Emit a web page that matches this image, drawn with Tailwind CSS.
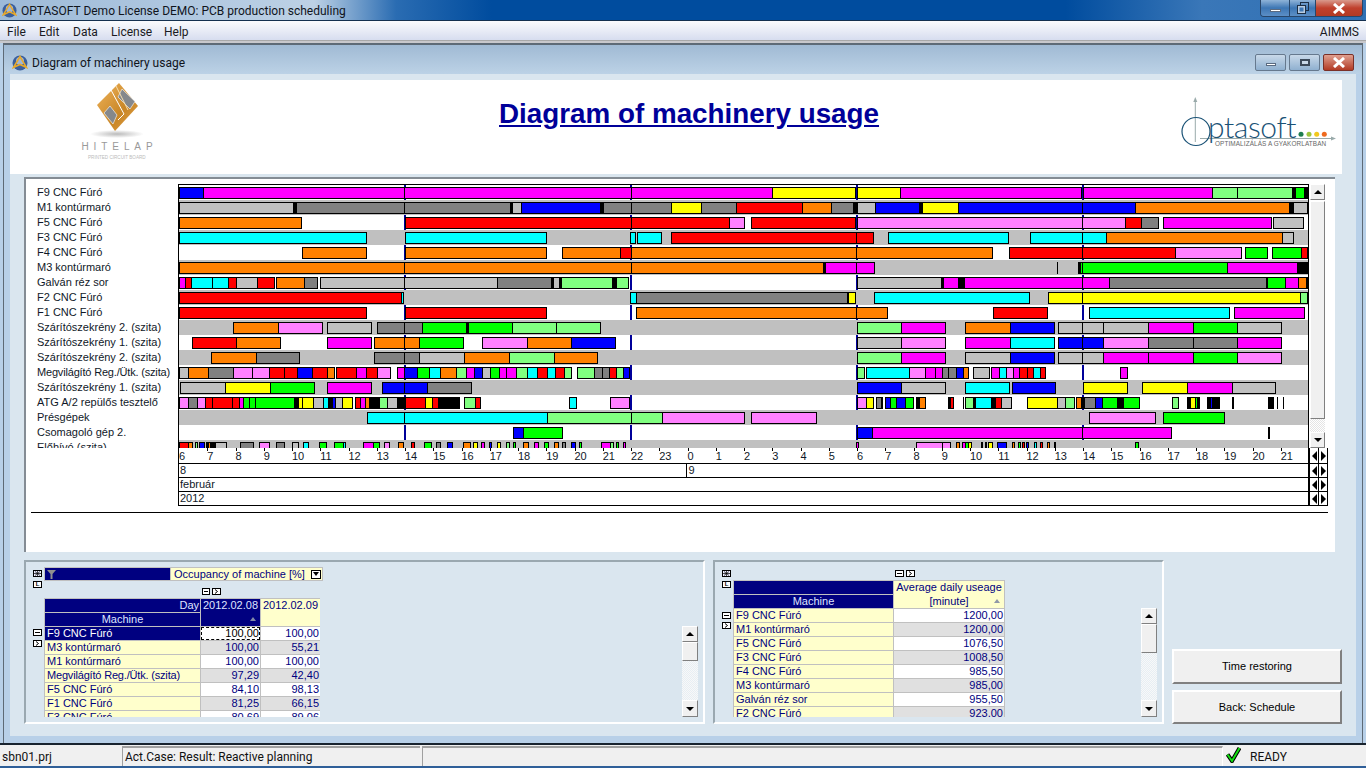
<!DOCTYPE html>
<html>
<head>
<meta charset="utf-8">
<script src="https://cdn.jsdelivr.net/npm/@tailwindcss/browser@4"></script>
</head>
<body class="bg-[#b8d0e8]">
<div class="w-[1366px] h-[768px] overflow-hidden flex flex-col font-['Liberation_Sans',Arial,sans-serif] text-[11px] text-black">

  <!-- App title bar -->
  <div class="h-[20px] shrink-0 flex items-center relative bg-[linear-gradient(90deg,#9dbad8_0%,#bdd1e5_23%,#2a6cb2_29%,#004c9e_36%,#004c9e_78%,#3a77b8_88%,#2f70b4_100%)]">
    <svg class="ml-[2px] shrink-0" width="15" height="15" viewBox="0 0 16 16"><circle cx="8" cy="8" r="7.5" fill="#3b5f9c"/><circle cx="8" cy="6" r="4" fill="#9fb6d8"/><path d="M1.5 12.5 8 1.5l6.5 11-6.5-3z" fill="none" stroke="#e8a92a" stroke-width="1.6"/></svg>
    <span class="ml-[4px] mt-[2px] text-[12px] font-['Roboto',sans-serif] text-[#10141c] whitespace-nowrap">OPTASOFT Demo License DEMO: PCB production scheduling</span>
    <div class="ml-auto mr-[3px] w-[103px] h-[17px] self-start flex border border-t-0 border-[#28466a] rounded-b-[4px] overflow-hidden">
      <div class="w-[29px] flex items-center justify-center border-r border-[#28466a] bg-[linear-gradient(#8fb3d8,#3d76b4_50%,#5c8fc6)]"><div class="w-[11px] h-[3px] mt-[5px] bg-white border border-[#5a6a80]"></div></div>
      <div class="w-[26px] flex items-center justify-center border-r border-[#28466a] bg-[linear-gradient(#8fb3d8,#3d76b4_50%,#5c8fc6)]"><svg width="12" height="12" viewBox="0 0 12 12"><rect x="3.5" y=".5" width="8" height="8" fill="none" stroke="#1d2f45"/><rect x=".5" y="3.5" width="8" height="8" fill="#b8cbe0" stroke="#1d2f45"/><rect x="2.5" y="5.5" width="4" height="4" fill="#3d76b4"/></svg></div>
      <div class="flex-1 flex items-center justify-center bg-[linear-gradient(#d99a8c,#c0402c_50%,#b23a24)]"><svg width="14" height="11" viewBox="0 0 14 11"><path d="M2 1l10 9M12 1 2 10" stroke="#fff" stroke-width="3"/></svg></div>
    </div>
  </div>
  <div class="h-px shrink-0 bg-[#14304f]"></div>

  <!-- Menu bar -->
  <div class="h-[19px] shrink-0 flex items-center pl-[7px] pr-[7px] pt-[3px] text-[12px] font-['Roboto',sans-serif] text-[#1a1a22] bg-[linear-gradient(#fafbfd,#d7ddef)]">
    <span class="w-[32px]">File</span><span class="w-[34px]">Edit</span><span class="w-[38px]">Data</span><span class="w-[53px]">License</span><span>Help</span><span class="ml-auto">AIMMS</span>
  </div>
  <div class="h-[3px] shrink-0 bg-[#c8c8cc] border-t border-[#a8a8a8]"></div>

  <!-- Child window region -->
  <div class="flex-1 min-h-0 pl-[3px] pr-[3px] bg-[#b8d0e8]">
    <div class="h-[700px] border-l border-r border-t-2 border-[#5e6a76] flex flex-col bg-[#b8d0e8]">
      <!-- Child title -->
      <div class="h-[29px] shrink-0 flex items-center pl-[8px] pr-[8px] pt-[6px] bg-[linear-gradient(#a0bad4,#bcd2e6)]">
        <svg class="shrink-0" width="16" height="16" viewBox="0 0 16 16"><circle cx="8" cy="8" r="7.5" fill="#3b5f9c"/><circle cx="8" cy="6" r="4" fill="#9fb6d8"/><path d="M1.5 12.5 8 1.5l6.5 11-6.5-3z" fill="none" stroke="#e8a92a" stroke-width="1.6"/></svg>
        <span class="ml-[4px] text-[12px] font-['Roboto',sans-serif] text-[#10141c] whitespace-nowrap">Diagram of machinery usage</span>
        <div class="ml-auto flex gap-[3px]">
          <div class="w-[31px] h-[17px] rounded-[2px] border border-[#66798e] flex items-center justify-center bg-[linear-gradient(#c9d9e9,#8fb0d0)]"><div class="w-[10px] h-[3px] mt-[4px] bg-white border border-[#5a6a80]"></div></div>
          <div class="w-[31px] h-[17px] rounded-[2px] border border-[#66798e] flex items-center justify-center bg-[linear-gradient(#c9d9e9,#8fb0d0)]"><div class="w-[10px] h-[7px] bg-[#c9d9e9] border-2 border-[#3c4a5a]"></div></div>
          <div class="w-[31px] h-[17px] rounded-[2px] border border-[#7a3028] flex items-center justify-center bg-[linear-gradient(#e0a090,#b23a24)]"><svg width="14" height="11" viewBox="0 0 14 11"><path d="M2 1l10 9M12 1 2 10" stroke="#fff" stroke-width="3"/></svg></div>
        </div>
      </div>

      <!-- Client -->
      <div class="flex-1 min-h-0 ml-[6px] mr-[6px] bg-[#dae6ef] pt-[6px]">
        <!-- Header panel -->
        <div class="w-[1332px] h-[94px] bg-white flex items-start">
          <div class="w-[489px] shrink-0">
            <svg class="ml-[70px]" width="90" height="94" viewBox="80 80 90 94">
              <defs><linearGradient id="og" x1="0" y1="0" x2="1" y2="1"><stop offset="0" stop-color="#efb45c"/><stop offset=".6" stop-color="#c98626"/><stop offset="1" stop-color="#e2a34a"/></linearGradient>
              <radialGradient id="sh"><stop offset="0" stop-color="#bbb"/><stop offset="1" stop-color="#fff"/></radialGradient></defs>
              <ellipse cx="117" cy="134" rx="27" ry="4" fill="url(#sh)"/>
              <polygon points="97,105 119,83 138,106 115,131" fill="url(#og)"/>
              <polygon points="122,89 135,101.5 130,109 118,97" fill="#85888c" stroke="#fff" stroke-width=".6"/>
              <polygon points="110,106 117,115 113,124 104,113" fill="#85888c" stroke="#fff" stroke-width=".6"/>
              <polyline points="111,90 124,114 118,120" fill="none" stroke="#fff" stroke-width="1"/>
              <polyline points="116,86 128,110" fill="none" stroke="#f7dfae" stroke-width="1"/>
              <text x="81.5" y="150" font-family="Liberation Sans" font-size="10" letter-spacing="4.9" fill="#999">HITELAP</text>
              <text x="88" y="159" font-family="Liberation Sans" font-size="4.6" fill="#bbb">PRINTED CIRCUIT BOARD</text>
            </svg>
          </div>
          <div class="mt-[16px] text-[27.8px] leading-[36px] font-bold underline text-[#000099] whitespace-nowrap">Diagram of machinery usage</div>
          <div class="ml-auto">
            <svg class="mr-[2px]" width="165" height="85" viewBox="1175 80 165 85">
              <path d="M1195.3 142V100" stroke="#9aa" stroke-width="1"/><path d="M1195.3 97l-2 5h4z" fill="#9aa"/>
              <path d="M1200 138.5H1333" stroke="#9aa" stroke-width="1"/><path d="M1336 138.5l-5-2v4z" fill="#9aa"/>
              <circle cx="1196" cy="131.5" r="14" fill="none" stroke="#1a5276" stroke-width="1.2"/>
              <text x="1208" y="138" font-family="Lato" font-weight="300" font-size="30" letter-spacing="-.4" fill="#1a5276">ptasoft</text>
              <circle cx="1301" cy="134.3" r="2.5" fill="#1d7d4f"/><circle cx="1309" cy="134.3" r="2.5" fill="#9cc43c"/><circle cx="1316.7" cy="134.3" r="2.5" fill="#f2c81e"/><circle cx="1324.3" cy="134.3" r="2.5" fill="#ee6a1f"/>
              <text x="1215" y="145.5" font-family="Liberation Sans" font-size="6.4" letter-spacing=".1" fill="#666">OPTIMALIZÁLÁS A GYAKORLATBAN</text>
            </svg>
          </div>
        </div>

        <!-- Main chart panel -->
        <div class="ml-[14px] mt-[3px] w-[1311px] h-[375px] bg-white border-t-2 border-l-2 border-[#848c94] pt-[5px]">
          <div class="flex h-[264px]">
            <!-- labels -->
            <div class="w-[152px] shrink-0 pl-[11px] pt-px h-[264px] overflow-hidden text-[#101828]">
              <div class="h-[15px] leading-[15px] whitespace-nowrap">F9 CNC Fúró</div>
              <div class="h-[15px] leading-[15px] whitespace-nowrap">M1 kontúrmaró</div>
              <div class="h-[15px] leading-[15px] whitespace-nowrap">F5 CNC Fúró</div>
              <div class="h-[15px] leading-[15px] whitespace-nowrap">F3 CNC Fúró</div>
              <div class="h-[15px] leading-[15px] whitespace-nowrap">F4 CNC Fúró</div>
              <div class="h-[15px] leading-[15px] whitespace-nowrap">M3 kontúrmaró</div>
              <div class="h-[15px] leading-[15px] whitespace-nowrap">Galván réz sor</div>
              <div class="h-[15px] leading-[15px] whitespace-nowrap">F2 CNC Fúró</div>
              <div class="h-[15px] leading-[15px] whitespace-nowrap">F1 CNC Fúró</div>
              <div class="h-[15px] leading-[15px] whitespace-nowrap">Szárítószekrény 2. (szita)</div>
              <div class="h-[15px] leading-[15px] whitespace-nowrap">Szárítószekrény 1. (szita)</div>
              <div class="h-[15px] leading-[15px] whitespace-nowrap">Szárítószekrény 2. (szita)</div>
              <div class="h-[15px] leading-[15px] whitespace-nowrap tracking-[-0.18px]">Megvilágító Reg./Ütk. (szita)</div>
              <div class="h-[15px] leading-[15px] whitespace-nowrap">Szárítószekrény 1. (szita)</div>
              <div class="h-[15px] leading-[15px] whitespace-nowrap">ATG A/2 repülős tesztelő</div>
              <div class="h-[15px] leading-[15px] whitespace-nowrap">Présgépek</div>
              <div class="h-[15px] leading-[15px] whitespace-nowrap">Csomagoló gép 2.</div>
              <div class="h-[15px] leading-[15px] whitespace-nowrap">Előhívó (szita)</div>
            </div>
            <!-- gantt canvas -->
            <div id="gantt" class="w-[1131px] h-[264px] shrink-0 border-l border-r border-t border-black overflow-hidden"></div>
            <!-- scrollbar -->
            <div class="w-[15px] ml-px h-[264px] shrink-0 flex flex-col">
              <div class="h-[16px] shrink-0 bg-[#f0f0f0] border border-t-white border-l-white border-r-[#808080] border-b-[#808080] flex items-center justify-center"><div class="w-0 h-0 border-x-[4px] border-x-transparent border-b-[4px] border-b-black"></div></div>
              <div class="h-[218px] shrink-0 mt-px bg-[#f0f0f0] border border-t-white border-l-white border-r-[#808080] border-b-[#808080]"></div>
              <div class="flex-1 bg-[repeating-conic-gradient(#e4e4e4_0_25%,#fff_0_50%)] [background-size:2px_2px]"></div>
              <div class="h-[16px] shrink-0 bg-[#f0f0f0] border border-t-white border-l-white border-r-[#808080] border-b-[#808080] flex items-center justify-center"><div class="w-0 h-0 border-x-[4px] border-x-transparent border-t-[4px] border-t-black"></div></div>
            </div>
          </div>
          <!-- axis -->
          <div class="ml-[152px] flex h-[58px]">
            <div class="w-[1130px] shrink-0 border-l border-black">
              <div id="hours" class="h-[16px] flex border-b border-black overflow-hidden leading-[17px] text-[#101828] whitespace-nowrap"></div>
              <div class="h-[14px] flex border-b border-black leading-[13px] text-[#101828]"><div class="w-[507.5px] shrink-0 pl-px border-r border-black">8</div><div class="pl-[2px]">9</div></div>
              <div class="h-[14px] border-b border-black pl-px leading-[13px] text-[#101828]">február</div>
              <div class="h-[14px] border-b border-black pl-px leading-[13px] text-[#101828]">2012</div>
            </div>
            <div class="w-[20px] shrink-0 border-l-2 border-r border-black">
              <div class="h-[16px] border-b border-black flex"><div class="w-[9px] border-r border-black flex items-center justify-center"><div class="w-0 h-0 border-y-[5px] border-y-transparent border-r-[5px] border-r-black"></div></div><div class="flex-1 flex items-center justify-center"><div class="w-0 h-0 border-y-[5px] border-y-transparent border-l-[5px] border-l-black"></div></div></div>
              <div class="h-[14px] border-b border-black flex"><div class="w-[9px] border-r border-black flex items-center justify-center"><div class="w-0 h-0 border-y-[5px] border-y-transparent border-r-[5px] border-r-black"></div></div><div class="flex-1 flex items-center justify-center"><div class="w-0 h-0 border-y-[5px] border-y-transparent border-l-[5px] border-l-black"></div></div></div>
              <div class="h-[14px] border-b border-black flex"><div class="w-[9px] border-r border-black flex items-center justify-center"><div class="w-0 h-0 border-y-[5px] border-y-transparent border-r-[5px] border-r-black"></div></div><div class="flex-1 flex items-center justify-center"><div class="w-0 h-0 border-y-[5px] border-y-transparent border-l-[5px] border-l-black"></div></div></div>
              <div class="h-[14px] border-b border-black flex"><div class="w-[9px] border-r border-black flex items-center justify-center"><div class="w-0 h-0 border-y-[5px] border-y-transparent border-r-[5px] border-r-black"></div></div><div class="flex-1 flex items-center justify-center"><div class="w-0 h-0 border-y-[5px] border-y-transparent border-l-[5px] border-l-black"></div></div></div>
            </div>
          </div>
          <div class="ml-[5px] mt-[6px] w-[1297px] h-px bg-black"></div>
        </div>

        <!-- Bottom row -->
        <div class="ml-[14px] mt-[8px] flex h-[164px]">
          <!-- Left pivot -->
          <div class="w-[681px] h-[164px] shrink-0 border-t-2 border-l-2 border-r-2 border-b-2 border-t-[#9aa8b0] border-l-[#9aa8b0] border-r-white border-b-white pl-[7px] pt-[5px] flex">
            <div class="w-[11px] shrink-0 pt-[3px] flex flex-col items-start">
              <div class="w-[9px] h-[7px] border border-black bg-[#eef] flex items-center justify-center"><svg width="7" height="5" viewBox="0 0 7 5"><path d="M3.5 0v5M1 .5l5 4M6 .5l-5 4M0 2.5h7" stroke="#000" stroke-width=".7"/></svg></div>
              <div class="w-[9px] h-[7px] mt-[4px] border border-black bg-white text-[6px] leading-[5px] font-bold text-center">L</div>
              <div class="w-[9px] h-[7px] mt-[41px] border border-black bg-white flex items-center justify-center"><div class="w-[5px] h-px bg-black"></div></div>
              <div class="w-[9px] h-[7px] mt-[4px] border border-black bg-white flex items-center justify-center"><svg width="5" height="5" viewBox="0 0 5 5"><path d="M1 .5l2.5 2-2.5 2" fill="none" stroke="#000"/></svg></div>
            </div>
            <div class="w-[279px] shrink-0">
              <div class="w-[279px] h-[14px] flex border border-[#c0c0c0]">
                <div class="w-[125px] shrink-0 bg-[#000080] pl-[2px] flex items-center"><svg width="9" height="9" viewBox="0 0 9 9"><path d="M0 0h9L5.5 4v5h-2V4z" fill="#909090"/></svg></div>
                <div class="flex-1 bg-[#ffffcc] flex items-center justify-between pl-[3px] pr-px text-[#000080] whitespace-nowrap border-l border-[#c0c0c0]">Occupancy of machine [%]<div class="w-[10px] h-[9px] border border-black bg-white flex items-center justify-center"><div class="w-0 h-0 border-x-[3px] border-x-transparent border-t-[4px] border-t-black"></div></div></div>
              </div>
              <div class="flex gap-[2px] ml-[158px] mt-[7px] h-[7px]">
                <div class="w-[8px] h-[7px] border border-black bg-white flex items-center justify-center"><div class="w-[4px] h-px bg-black"></div></div>
                <div class="w-[9px] h-[7px] border border-black bg-white flex items-center justify-center"><svg width="5" height="5" viewBox="0 0 5 5"><path d="M1 .5l2.5 2-2.5 2" fill="none" stroke="#000"/></svg></div>
              </div>
              <div class="mt-[3px] h-[119px] overflow-hidden">
                <div class="w-[276px] grid grid-cols-[155px_59px_59px] gap-px bg-[#c0c0c0] border border-[#c0c0c0] auto-rows-[13px] leading-[13px] text-[#000080]">
                  <div class="bg-[#000080] text-[#dfe4ff] text-right pr-px">Day</div>
                  <div class="row-span-2 bg-[#000080] text-[#dfe4ff] relative text-center">2012.02.08<div class="absolute right-[4px] bottom-[5px] w-0 h-0 border-x-[3px] border-x-transparent border-b-[4px] border-b-[#8088a8]"></div></div>
                  <div class="row-span-2 bg-[#ffffcc] text-center">2012.02.09</div>
                  <div class="bg-[#000080] text-[#dfe4ff] text-center">Machine</div>

                  <div class="bg-[#000080] text-white pl-[2px]">F9 CNC Fúró</div><div class="bg-white text-right outline-dashed outline-1 outline-offset-[-1px] outline-black text-black pr-px">100,00</div><div class="bg-white text-right pr-px">100,00</div>
                  <div class="bg-[#ffffcc] pl-[2px]">M3 kontúrmaró</div><div class="bg-[#e0e0e0] text-right pr-px">100,00</div><div class="bg-[#e0e0e0] text-right pr-px">55,21</div>
                  <div class="bg-[#ffffcc] pl-[2px]">M1 kontúrmaró</div><div class="bg-white text-right pr-px">100,00</div><div class="bg-white text-right pr-px">100,00</div>
                  <div class="bg-[#ffffcc] pl-[2px] tracking-[-0.18px] whitespace-nowrap">Megvilágító Reg./Ütk. (szita)</div><div class="bg-[#e0e0e0] text-right pr-px">97,29</div><div class="bg-[#e0e0e0] text-right pr-px">42,40</div>
                  <div class="bg-[#ffffcc] pl-[2px]">F5 CNC Fúró</div><div class="bg-white text-right pr-px">84,10</div><div class="bg-white text-right pr-px">98,13</div>
                  <div class="bg-[#ffffcc] pl-[2px]">F1 CNC Fúró</div><div class="bg-[#e0e0e0] text-right pr-px">81,25</div><div class="bg-[#e0e0e0] text-right pr-px">66,15</div>
                  <div class="bg-[#ffffcc] pl-[2px]">F3 CNC Fúró</div><div class="bg-white text-right pr-px">80,69</div><div class="bg-white text-right pr-px">89,06</div>
                </div>
              </div>
            </div>
            <div class="w-[16px] ml-[359px] mt-[59px] h-[91px] shrink-0 flex flex-col">
              <div class="h-[16px] shrink-0 bg-[#f0f0f0] border border-t-white border-l-white border-r-[#808080] border-b-[#808080] flex items-center justify-center"><div class="w-0 h-0 border-x-[4px] border-x-transparent border-b-[4px] border-b-black"></div></div>
              <div class="h-[19px] shrink-0 bg-[#f0f0f0] border border-t-white border-l-white border-r-[#808080] border-b-[#808080]"></div>
              <div class="flex-1 bg-[repeating-conic-gradient(#e6eef4_0_25%,#f8f8f8_0_50%)] [background-size:2px_2px]"></div>
              <div class="h-[17px] shrink-0 bg-[#f0f0f0] border border-t-white border-l-white border-r-[#808080] border-b-[#808080] flex items-center justify-center"><div class="w-0 h-0 border-x-[4px] border-x-transparent border-t-[4px] border-t-black"></div></div>
            </div>
          </div>

          <!-- Right pivot -->
          <div class="w-[451px] h-[164px] ml-[8px] shrink-0 border-t-2 border-l-2 border-r-2 border-b-2 border-t-[#9aa8b0] border-l-[#9aa8b0] border-r-white border-b-white pl-[7px] pt-[8px] flex">
            <div class="w-[11px] shrink-0 flex flex-col items-start">
              <div class="w-[9px] h-[7px] border border-black bg-[#eef] flex items-center justify-center"><svg width="7" height="5" viewBox="0 0 7 5"><path d="M3.5 0v5M1 .5l5 4M6 .5l-5 4M0 2.5h7" stroke="#000" stroke-width=".7"/></svg></div>
              <div class="w-[9px] h-[7px] mt-[4px] border border-black bg-white text-[6px] leading-[5px] font-bold text-center">L</div>
              <div class="w-[9px] h-[7px] mt-[24px] border border-black bg-white flex items-center justify-center"><div class="w-[5px] h-px bg-black"></div></div>
              <div class="w-[9px] h-[7px] mt-[3px] border border-black bg-white flex items-center justify-center"><svg width="5" height="5" viewBox="0 0 5 5"><path d="M1 .5l2.5 2-2.5 2" fill="none" stroke="#000"/></svg></div>
            </div>
            <div class="w-[272px] shrink-0">
              <div class="flex gap-[2px] ml-[162px] h-[7px]">
                <div class="w-[9px] h-[7px] border border-black bg-white flex items-center justify-center"><div class="w-[5px] h-px bg-black"></div></div>
                <div class="w-[9px] h-[7px] border border-black bg-white flex items-center justify-center"><svg width="5" height="5" viewBox="0 0 5 5"><path d="M1 .5l2.5 2-2.5 2" fill="none" stroke="#000"/></svg></div>
              </div>
              <div class="mt-[3px] h-[137px] overflow-hidden">
                <div class="grid grid-cols-[159px_110px] gap-px bg-[#c0c0c0] border border-[#c0c0c0] auto-rows-[13px] leading-[13px] text-[#000080] w-[272px]">
                  <div class="bg-[#000080]"></div>
                  <div class="row-span-2 bg-[#ffffcc] text-center relative leading-[13.5px]">Average daily useage<br>[minute]<div class="absolute right-[4px] bottom-[5px] w-0 h-0 border-x-[3px] border-x-transparent border-b-[4px] border-b-[#9098a8]"></div></div>
                  <div class="bg-[#000080] text-[#dfe4ff] text-center">Machine</div>

                  <div class="bg-[#ffffcc] pl-[2px]">F9 CNC Fúró</div><div class="bg-white text-right pr-px">1200,00</div>
                  <div class="bg-[#ffffcc] pl-[2px]">M1 kontúrmaró</div><div class="bg-[#e0e0e0] text-right pr-px">1200,00</div>
                  <div class="bg-[#ffffcc] pl-[2px]">F5 CNC Fúró</div><div class="bg-white text-right pr-px">1076,50</div>
                  <div class="bg-[#ffffcc] pl-[2px]">F3 CNC Fúró</div><div class="bg-[#e0e0e0] text-right pr-px">1008,50</div>
                  <div class="bg-[#ffffcc] pl-[2px]">F4 CNC Fúró</div><div class="bg-white text-right pr-px">985,50</div>
                  <div class="bg-[#ffffcc] pl-[2px]">M3 kontúrmaró</div><div class="bg-[#e0e0e0] text-right pr-px">985,00</div>
                  <div class="bg-[#ffffcc] pl-[2px]">Galván réz sor</div><div class="bg-white text-right pr-px">955,50</div>
                  <div class="bg-[#ffffcc] pl-[2px]">F2 CNC Fúró</div><div class="bg-[#e0e0e0] text-right pr-px">923,00</div>
                </div>
              </div>
            </div>
            <div class="w-[16px] ml-[136px] mt-[38px] h-[109px] shrink-0 flex flex-col">
              <div class="h-[16px] shrink-0 bg-[#f0f0f0] border border-t-white border-l-white border-r-[#808080] border-b-[#808080] flex items-center justify-center"><div class="w-0 h-0 border-x-[4px] border-x-transparent border-b-[4px] border-b-black"></div></div>
              <div class="h-[29px] shrink-0 bg-[#f0f0f0] border border-t-white border-l-white border-r-[#808080] border-b-[#808080]"></div>
              <div class="flex-1 bg-[repeating-conic-gradient(#e6eef4_0_25%,#f8f8f8_0_50%)] [background-size:2px_2px]"></div>
              <div class="h-[17px] shrink-0 bg-[#f0f0f0] border border-t-white border-l-white border-r-[#808080] border-b-[#808080] flex items-center justify-center"><div class="w-0 h-0 border-x-[4px] border-x-transparent border-t-[4px] border-t-black"></div></div>
            </div>
          </div>

          <!-- Buttons -->
          <div class="w-[170px] ml-[8px] shrink-0 flex flex-col justify-end gap-[6px]">
            <div class="h-[35px] bg-[#f0f0f0] border-2 border-t-white border-l-white border-r-[#808080] border-b-[#808080] flex items-center justify-center">Time restoring</div>
            <div class="h-[34px] bg-[#f0f0f0] border-2 border-t-white border-l-white border-r-[#808080] border-b-[#808080] flex items-center justify-center">Back: Schedule</div>
          </div>
        </div>
      </div>
      <div class="h-[7px] shrink-0 bg-[#b8d0e8]"></div>
    </div>
  </div>

  <!-- Status bar -->
  <div class="h-[25px] shrink-0 border-t-2 border-[#18232e] bg-[#f0f0f0] flex font-['Roboto',sans-serif] text-[12px] text-[#101010] leading-[24px] whitespace-nowrap relative">
    <div class="w-[120px] pl-[2px]">sbn01.prj</div>
    <div class="w-[298px] mt-[1px] ml-[2px] pl-[2px] border-t-2 border-l border-[#a0a0a0] leading-[19px]">Act.Case: Result: Reactive planning</div>
    <div class="w-[801px] mt-[1px] ml-[2px] border-t-2 border-l border-r border-[#a0a0a0] border-r-white"></div>
    <svg class="ml-[3px] mt-[1px]" width="15" height="17" viewBox="0 0 15 17"><path d="M1.5 8.5 6 15 13.5 2" fill="none" stroke="#000" stroke-width="4"/><path d="M1.5 8.5 6 15 13.5 2" fill="none" stroke="#12e012" stroke-width="2"/></svg>
    <span class="ml-[9px]">READY</span>
    <div class="absolute left-0 right-0 bottom-0 h-[2px] bg-[#2f5f98]"></div>
  </div>
</div>

<script>
var C={m:'bg-[#ff00ff]',b:'bg-[#0000ff]',y:'bg-[#ffff00]',g:'bg-[#00ff00]',l:'bg-[#80ff80]',p:'bg-[#ff80ff]',o:'bg-[#ff8000]',r:'bg-[#ff0000]',c:'bg-[#00ffff]',s:'bg-[#c0c0c0]',d:'bg-[#808080]',k:'bg-black'};
var R=[
"179 203 b,203 404 m,404 631 m,631 772 m,772 856 y,857 900 y,900 1082 m,1083 1212 m,1212 1237 l,1237 1292 l,1292 1295 k,1295 1304 g,1304 1306 k,1306 1308 l",
"179 293 s,293 296 k,296 404 d,404 510 d,510 512 k,512 521 s,521 600 b,600 603 k,603 631 d,631 671 d,671 701 y,701 736 d,736 802 r,802 831 o,831 853 d,853 857 k,857 875 s,875 919 b,919 922 k,922 958 y,958 1082 b,1082 1135 b,1135 1289 o,1289 1293 k,1293 1308 s",
"179 302 o,405 631 r,631 729 r,729 745 p,751 856 r,857 1082 p,1082 1125 p,1125 1141 r,1141 1159 d,1163 1272 m,1273 1304 s",
"179 367 c,405 547 c,630 636 c,637 662 c,671 856 r,856 874 r,888 1009 c,1030 1082 c,1082 1106 c,1106 1282 o,1282 1294 s",
"302 367 o,405 547 o,562 620 o,620 631 r,631 856 o,856 993 o,1009 1082 r,1082 1175 r,1175 1242 p,1245 1268 g,1272 1301 g,1301 1308 r",
"179 404 o,404 631 o,631 823 o,823 825 k,825 856 m,856 874 m,874 875 k,1057 1058 k,1078 1080 k,1080 1082 g,1082 1227 g,1227 1297 m,1297 1308 k",
"179 185 m,185 191 r,191 212 c,212 228 c,228 236 r,236 257 s,257 275 r,276 304 o,304 318 d,320 404 s,404 497 s,497 551 d,551 553 k,553 559 s,559 561 k,561 612 l,612 616 k,616 629 l,857 941 s,941 943 k,943 958 m,958 961 k,961 962 s,962 964 k,964 1082 m,1082 1109 m,1109 1266 d,1266 1267 k,1267 1285 g,1285 1298 m,1298 1306 o,1306 1308 k",
"179 401 r,401 404 c,630 636 c,636 847 d,847 848 k,848 856 y,874 1030 c,1048 1082 y,1082 1300 y,1300 1308 l",
"179 367 r,405 547 r,636 856 o,856 888 o,993 1048 r,1089 1230 c,1234 1305 m",
"233 278 o,278 323 p,327 372 s,377 404 d,404 422 d,422 466 g,466 468 k,468 512 g,512 556 l,556 601 l,857 901 l,901 946 m,965 1010 o,1010 1055 b,1058 1082 s,1082 1103 s,1103 1148 s,1148 1193 m,1193 1237 g,1237 1282 s",
"192 236 r,236 281 o,327 372 m,374 404 o,404 419 o,419 464 g,482 527 p,527 571 o,571 616 b,857 901 s,901 946 p,965 1010 m,1010 1055 c,1058 1082 b,1082 1103 b,1103 1148 p,1148 1193 d,1193 1237 d,1237 1282 m",
"211 256 o,256 300 d,374 404 d,404 419 d,419 464 s,464 509 o,509 554 l,554 598 o,857 901 l,901 946 m,965 1010 s,1010 1055 b,1058 1082 s,1082 1103 s,1103 1148 m,1148 1193 m,1193 1237 g,1237 1282 p",
"179 188 s,188 208 o,208 233 d,233 252 p,252 269 p,269 284 r,284 297 r,297 312 b,312 327 r,327 335 o,336 356 r,356 366 m,366 377 r,377 391 p,397 404 m,404 417 b,417 429 g,429 440 c,440 456 o,456 466 l,466 474 m,474 482 b,482 490 s,490 499 g,499 506 m,506 516 m,516 527 l,527 537 c,537 547 r,547 555 c,555 564 r,564 572 l,577 594 l,594 602 d,602 609 d,609 616 r,616 623 l,623 630 b,857 865 l,866 909 c,909 925 p,925 935 m,935 942 m,942 948 d,948 956 d,956 963 b,963 969 o,973 990 s,991 999 m,999 1006 c,1006 1013 p,1013 1019 m,1019 1027 r,1027 1033 r,1033 1040 c,1040 1046 r,1120 1128 m",
"180 225 s,225 270 y,270 315 g,327 372 m,382 404 b,404 427 b,427 472 d,857 901 b,901 946 s,965 1010 c,1012 1056 b,1083 1128 y,1142 1187 y,1187 1232 m,1232 1276 s",
"179 188 p,188 197 d,197 205 p,205 212 r,212 232 r,232 239 r,239 243 m,243 249 g,249 255 g,255 294 g,294 298 k,298 302 y,302 313 y,313 323 s,323 328 c,328 332 k,332 335 b,335 342 s,342 353 y,355 360 r,360 365 m,365 369 o,369 379 k,379 387 l,387 397 s,397 401 k,401 402 m,402 405 k,405 425 r,425 432 y,432 438 r,438 444 k,444 445 s,445 460 k,464 475 l,475 481 r,569 577 c,610 630 p,857 866 p,866 874 y,876 881 d,881 883 m,885 890 b,890 896 g,896 905 b,905 914 g,916 919 k,919 926 o,948 950 k,950 953 r,953 954 k,963 964 k,965 973 l,973 975 k,975 991 c,991 995 k,995 1001 r,1001 1012 s,1027 1057 y,1057 1065 s,1065 1075 l,1076 1081 o,1081 1084 k,1084 1095 d,1095 1102 b,1102 1117 g,1117 1123 k,1123 1140 g,1172 1179 l,1187 1190 k,1190 1195 y,1195 1197 g,1197 1200 k,1207 1210 k,1210 1212 b,1212 1215 k,1215 1216 y,1216 1220 k,1232 1234 k,1268 1274 k,1277 1278 k,1283 1284 k",
"367 404 c,404 547 c,547 631 l,631 662 l,662 745 p,751 817 p,1089 1156 p,1163 1225 g",
"513 523 b,523 563 g,857 872 b,872 1082 m,1082 1172 m,1268 1270 k",
"179 188 r,188 193 o,195 198 l,199 205 b,206 208 k,208 210 o,210 213 k,213 215 k,215 227 s,240 254 d,259 270 p,276 285 d,292 299 s,303 309 c,319 327 g,334 343 g,343 346 c,363 373 m,373 380 g,384 390 p,398 404 o,411 415 r,424 432 g,436 441 d,447 453 b,463 471 o,473 478 y,481 485 m,489 492 b,497 501 y,506 510 l,513 516 g,523 529 o,534 539 m,544 549 g,554 559 o,562 566 d,571 576 b,579 582 g,601 610 m,610 614 l,616 619 g,623 626 m,856 859 m,916 942 p,942 951 p,956 960 o,962 965 m,965 968 g,968 972 y,981 983 k,985 987 p,988 993 y,997 1007 b,1012 1015 o,1018 1021 g,1022 1025 r,1026 1029 b,1034 1037 c,1040 1043 r,1047 1050 o,1054 1056 k,1135 1139 g"
];
var g=document.getElementById('gantt');
R.forEach(function(line,i){
  var row=document.createElement('div');
  row.className='relative h-[15px] '+(i%2?'bg-[#c0c0c0]':'bg-white');
  if(i%2==0){[404,630,856,1082].forEach(function(x){
    var n=document.createElement('div');
    n.className='absolute top-0 bottom-0 w-[2px] bg-[#000099]';
    n.style.left=(x-179)+'px';
    row.appendChild(n);
  });}
  var segs=line.split(',');
  segs.forEach(function(s,j){
    var p=s.split(' '),a=+p[0],b=+p[1];
    var nx=segs[j+1]?+segs[j+1].split(' ')[0]:1e9;
    var joined=p[2]!='k'&&nx<=b;
    var d=document.createElement('div');
    d.className='absolute top-[2px] h-[12px] box-border '+C[p[2]]+(p[2]=='k'?'':' border border-black');
    d.style.left=(a-179)+'px';
    d.style.width=(b-a+(joined?1:0))+'px';
    row.appendChild(d);
  });
  g.appendChild(row);
});
var H=document.getElementById('hours');
for(var i=0;i<40;i++){
  var c=document.createElement('div');
  c.className='relative shrink-0 w-[28.26px] pl-0';
  c.textContent=(6+i)%24;
  if(i){var t=document.createElement('div');t.className='absolute left-0 top-0 w-px h-[3px] bg-black';c.appendChild(t);}
  H.appendChild(c);
}
</script>
</body>
</html>
